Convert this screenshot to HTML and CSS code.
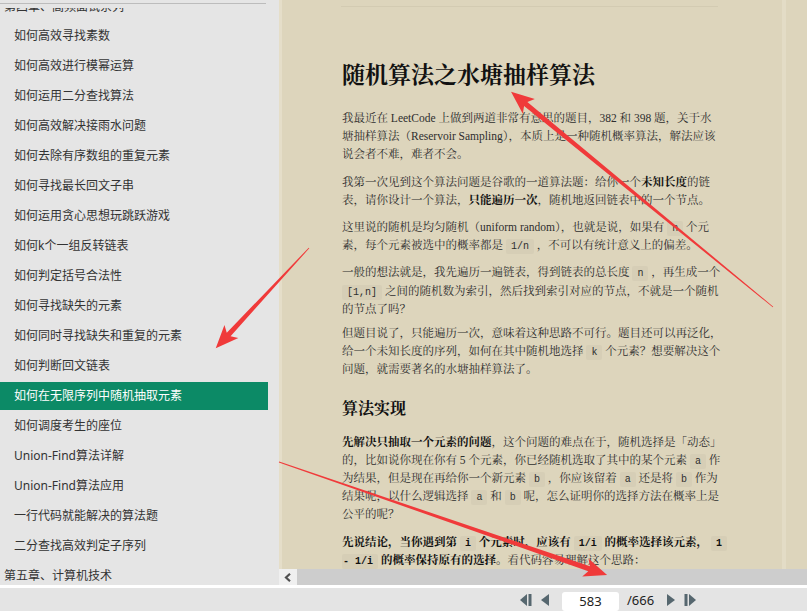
FILE: index.html
```html
<!DOCTYPE html>
<html lang="zh-CN">
<head>
<meta charset="utf-8">
<title>随机算法之水塘抽样算法</title>
<link rel="stylesheet" href="styles.css">
</head>
<body>
<div class="app">
  <div class="main">
    <aside class="sidebar">
      <ul class="toc">
        <li class="chapter">第四章、高频面试系列</li>
        <li>如何高效寻找素数</li>
        <li>如何高效进行模幂运算</li>
        <li>如何运用二分查找算法</li>
        <li>如何高效解决接雨水问题</li>
        <li>如何去除有序数组的重复元素</li>
        <li>如何寻找最长回文子串</li>
        <li>如何运用贪心思想玩跳跃游戏</li>
        <li>如何k个一组反转链表</li>
        <li>如何判定括号合法性</li>
        <li>如何寻找缺失的元素</li>
        <li>如何同时寻找缺失和重复的元素</li>
        <li>如何判断回文链表</li>
        <li class="active">如何在无限序列中随机抽取元素</li>
        <li>如何调度考生的座位</li>
        <li>Union-Find算法详解</li>
        <li>Union-Find算法应用</li>
        <li>一行代码就能解决的算法题</li>
        <li>二分查找高效判定子序列</li>
        <li class="chapter">第五章、计算机技术</li>
      </ul>
    </aside>
    <section class="viewer">
      <div class="pane">
        <article class="page">
          <hr class="rule">
          <h1>随机算法之水塘抽样算法</h1>
          <p>我最近在 LeetCode 上做到两道非常有意思的题目，382 和 398 题，关于水<br>塘抽样算法（Reservoir Sampling），本质上是一种随机概率算法，解法应该<br>说会者不难，难者不会。</p>
          <p>我第一次见到这个算法问题是谷歌的一道算法题：给你一个<b>未知长度</b>的链<br>表，请你设计一个算法，<b>只能遍历一次</b>，随机地返回链表中的一个节点。</p>
          <p>这里说的随机是均匀随机（uniform random），也就是说，如果有 <code>n</code> 个元<br>素，每个元素被选中的概率都是 <code>1/n</code> ，不可以有统计意义上的偏差。</p>
          <p class="tight">一般的想法就是，我先遍历一遍链表，得到链表的总长度 <code>n</code> ，再生成一个<br><code>[1,n]</code> 之间的随机数为索引，然后找到索引对应的节点，不就是一个随机<br>的节点了吗？</p>
          <p>但题目说了，只能遍历一次，意味着这种思路不可行。题目还可以再泛化，<br>给一个未知长度的序列，如何在其中随机地选择 <code>k</code> 个元素？想要解决这个<br>问题，就需要著名的水塘抽样算法了。</p>
          <h2>算法实现</h2>
          <p><b>先解决只抽取一个元素的问题</b>，这个问题的难点在于，随机选择是「动态」<br>的，比如说你现在你有 5 个元素，你已经随机选取了其中的某个元素 <code>a</code> 作<br>为结果，但是现在再给你一个新元素 <code>b</code> ，你应该留着 <code>a</code> 还是将 <code>b</code> 作为<br>结果呢，以什么逻辑选择 <code>a</code> 和 <code>b</code> 呢，怎么证明你的选择方法在概率上是<br>公平的呢？</p>
          <p><b>先说结论，当你遇到第 <code>i</code> 个元素时，应该有 <code>1/i</code> 的概率选择该元素， <code>1</code><br><code class="cont">- 1/i</code> 的概率保持原有的选择</b>。看代码容易理解这个思路：</p>
        </article>
      </div>
      <div class="hscroll">
        <div class="hbtn">
          <svg width="8" height="9" viewBox="0 0 8 9"><polyline points="6,0.8 2,4.5 6,8.2" fill="none" stroke="#505050" stroke-width="2.2"/></svg>
        </div>
        <div class="htrack"></div>
      </div>
    </section>
  </div>
  <footer class="toolbar">
    <svg class="nav first" width="12" height="12" viewBox="0 0 12 12"><polygon points="7,0 7,12 0,6"/><rect x="8.5" y="0" width="3" height="12"/></svg>
    <svg class="nav prev" width="8" height="12" viewBox="0 0 8 12"><polygon points="8,0 8,12 0,6"/></svg>
    <div class="pagebox">583</div>
    <span class="total">/666</span>
    <svg class="nav next" width="8" height="12" viewBox="0 0 8 12"><polygon points="0,0 0,12 8,6"/></svg>
    <svg class="nav last" width="12" height="12" viewBox="0 0 12 12"><rect x="0.5" y="0" width="3" height="12"/><polygon points="5,0 5,12 12,6"/></svg>
  </footer>
  <svg class="annot" width="807" height="611" viewBox="0 0 807 611">
    <g transform="translate(773 307) rotate(219.4)"><polygon points="0,-0.4 320,-2.6 316,-9.5 339,0 316,9.5 320,2.6 0,0.4"/></g>
    <g transform="translate(309 248) rotate(132.9)"><polygon points="0,-0.4 118,-2.6 114,-9.5 137,0 114,9.5 118,2.6 0,0.4"/></g>
    <g transform="translate(279 462) rotate(19)"><polygon points="0,-0.4 328,-2.6 324,-9.5 347,0 324,9.5 328,2.6 0,0.4"/></g>
  </svg>
</div>
</body>
</html>
```
FILE: styles.css
```css
html, body {
  margin: 0;
  padding: 0;
}
body {
  width: 807px;
  height: 611px;
  overflow: hidden;
  background: #ffffff;
  font-family: "Noto Sans", "Noto Sans CJK SC", sans-serif;
}
.app {
  position: relative;
  height: 611px;
  display: flex;
  flex-direction: column;
}
.main {
  height: 585px;
  display: flex;
}

/* sidebar */
.sidebar {
  position: relative;
  width: 279px;
  flex: none;
  background: #e5e5e5;
  overflow: hidden;
}
.sidebar::before {
  content: "";
  position: absolute;
  left: 0;
  top: 0;
  width: 279px;
  height: 8px;
  background: #e5e5e5;
  z-index: 1;
}
.sidebar::after {
  content: "";
  position: absolute;
  left: 0;
  top: 3px;
  width: 266px;
  height: 1px;
  background: #bcbcbc;
  z-index: 2;
}
.toc {
  list-style: none;
  margin: -9px 0 0;
  padding: 0;
  width: 268px;
}
.toc li {
  height: 28px;
  margin-top: 2px;
  line-height: 28px;
  padding-left: 14px;
  font-size: 12px;
  color: #333333;
  white-space: nowrap;
}
.toc li.chapter {
  padding-left: 4px;
}
.toc li.chapter:first-child {
  height: 27px;
  line-height: 27px;
}
.toc li.active {
  background: #0c8a66;
  color: #ffffff;
}

/* viewer */
.viewer {
  flex: 1;
  min-width: 0;
  display: flex;
  flex-direction: column;
}
.pane {
  flex: 1;
  display: flex;
  background: #ddd5bc;
  overflow: hidden;
}
.page {
  width: 440px;
  flex: none;
  padding: 6px 0 0 60px;
  border-left: 3px solid #e5dec9;
  border-right: 4px solid #e3dcc6;
  font-family: "Liberation Serif", "Noto Serif CJK SC", "Noto Sans CJK SC", serif;
  color: #2e2e2e;
}
.rule {
  margin: 0 0 0 -1px;
  width: 377px;
  height: 1px;
  border: 0;
  background: #d3cbb2;
}
.page h1 {
  margin: 54px 0 18px;
  font-size: 23px;
  line-height: 30px;
  font-weight: 700;
  color: #111111;
  white-space: nowrap;
}
.page h2 {
  margin: 18px 0 12px;
  font-size: 16px;
  line-height: 24px;
  font-weight: 700;
  color: #111111;
}
.page p {
  margin: 0 0 9px;
  font-size: 11.5px;
  line-height: 18.2px;
  white-space: nowrap;
}
.page p.tight {
  margin-bottom: 6px;
}
.page b {
  color: #111111;
}
.page code {
  font-family: "Liberation Mono", "DejaVu Sans Mono", monospace;
  font-size: 10px;
  line-height: 10px;
  padding: 2px 5px;
  background: #d6ceb6;
  border-radius: 2px;
}
.page code.cont {
  padding-left: 1px;
}

/* horizontal scrollbar */
.hscroll {
  height: 16px;
  display: flex;
  background: #cdcdcd;
}
.hbtn {
  width: 18px;
  display: flex;
  align-items: center;
  justify-content: center;
  background: #f0f0f0;
}
.htrack {
  flex: 1;
}

/* bottom toolbar */
.toolbar {
  height: 23px;
  border-top: 3px solid #ffffff;
  background: #e4e4e4;
  display: flex;
  align-items: center;
  padding-left: 520px;
  font-family: "Noto Sans", "Liberation Sans", sans-serif;
}
.nav {
  fill: #56676f;
  display: block;
}
.first { margin-right: 9px; }
.prev { margin-right: 13px; }
.pagebox {
  width: 57px;
  height: 19px;
  margin-top: 3px;
  background: #ffffff;
  border-radius: 3px;
  text-align: center;
  line-height: 19px;
  font-size: 13px;
  color: #222222;
}
.total {
  margin-left: 8px;
  margin-right: 13px;
  font-size: 13px;
  color: #222222;
}
.next { margin-right: 9px; }

/* annotation arrows */
.annot {
  position: absolute;
  left: 0;
  top: 0;
  pointer-events: none;
  fill: #f03a3a;
}
```
